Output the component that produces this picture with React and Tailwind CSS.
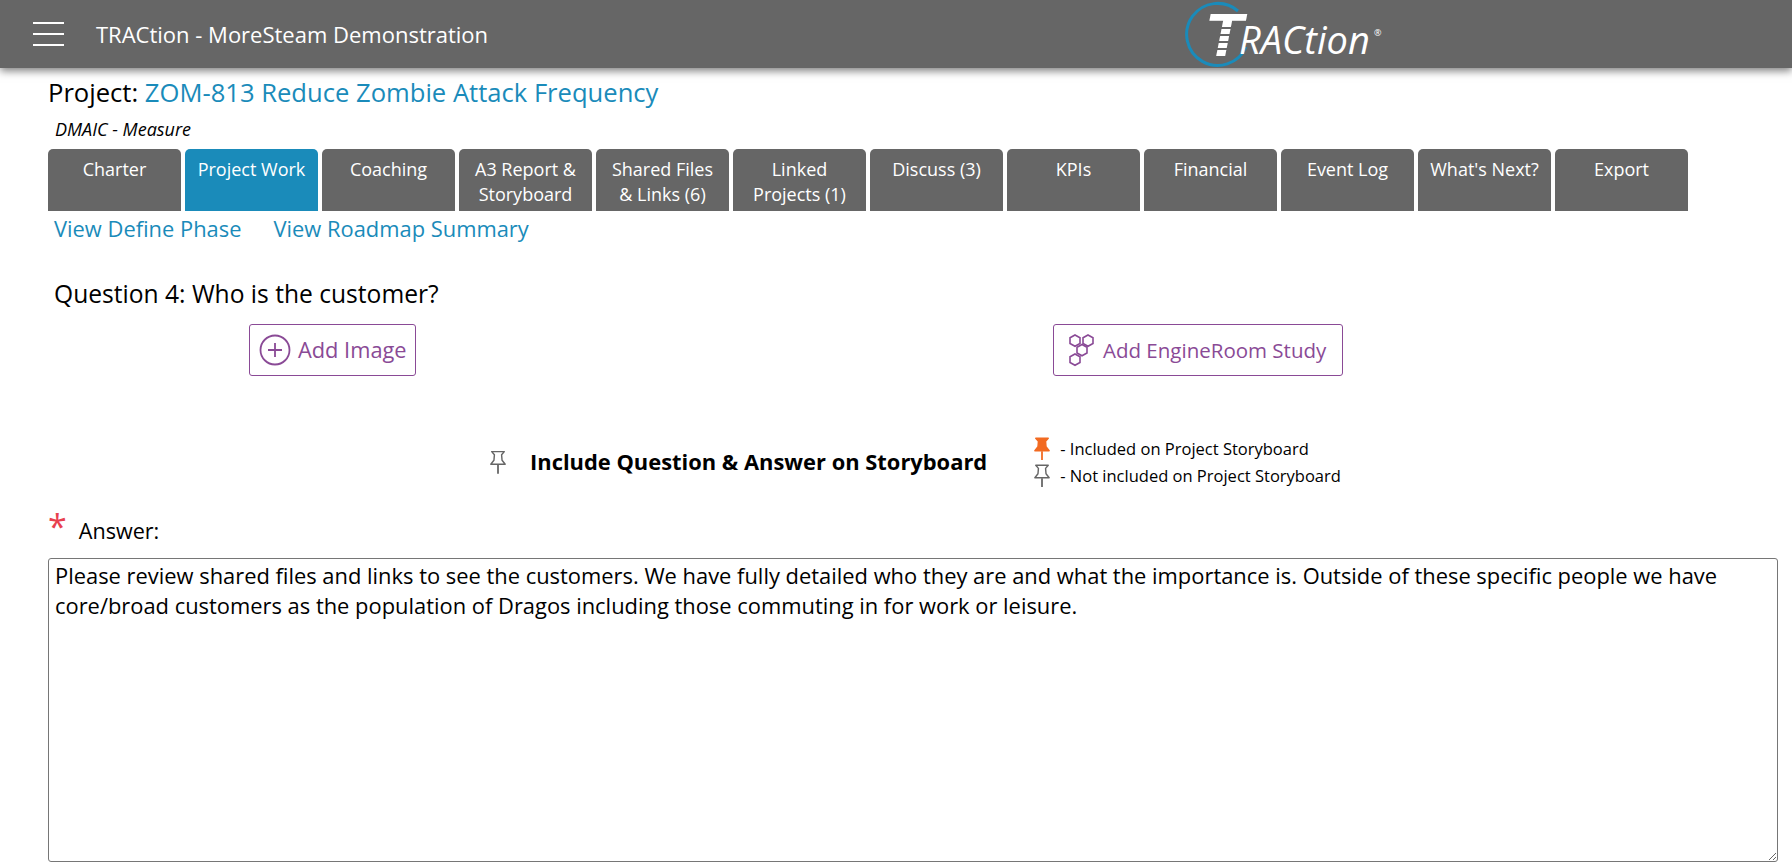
import { useState } from 'react';

const tabs = [
  { label: 'Charter' },
  { label: 'Project Work', active: true },
  { label: 'Coaching' },
  { label: 'A3 Report & Storyboard' },
  { label: 'Shared Files & Links (6)' },
  { label: 'Linked Projects (1)' },
  { label: 'Discuss (3)' },
  { label: 'KPIs' },
  { label: 'Financial' },
  { label: 'Event Log' },
  { label: "What's Next?" },
  { label: 'Export' },
];

const answer =
  'Please review shared files and links to see the customers. We have fully detailed who they are and what the importance is. Outside of these specific people we have core/broad customers as the population of Dragos including those commuting in for work or leisure.';

function Pin({ filled = false, className = '' }) {
  return (
    <svg viewBox="0 0 20 28" className={className}>
      <path
        d="M3 2.5 H17 L14 6 L14.5 12 L18 16.5 H2 L5.5 12 L6 6 Z"
        fill={filled ? '#f26a21' : 'none'}
        stroke={filled ? '#f26a21' : '#666'}
        strokeWidth="1.6"
        strokeLinejoin="round"
      />
      <path d="M10 17 V27" stroke={filled ? '#f26a21' : '#666'} strokeWidth="2" />
    </svg>
  );
}

function Logo() {
  return (
    <div className="relative h-[68px] w-[200px] shrink-0">
      <svg viewBox="0 0 200 68" className="absolute inset-0 h-full w-full">
        <path d="M58 11 A31 31 0 1 0 66 47" fill="none" stroke="#1a8bba" strokeWidth="3" />
        <text
          x="25"
          y="56"
          fontFamily="'Liberation Sans', sans-serif"
          fontSize="62"
          fontWeight="700"
          fontStyle="italic"
          fill="#fff"
        >
          T
        </text>
        <path d="M22 28 H56 M22 35 H56 M22 42 H56 M22 49 H56" stroke="#666" strokeWidth="2" />
      </svg>
      <span className="absolute left-[59px] top-[17px] font-['Open_Sans',sans-serif] text-[38px] leading-[44px] font-medium italic text-white">
        RACtion
      </span>
      <span className="absolute left-[194px] top-[28px] text-[9px] leading-none text-white">®</span>
    </div>
  );
}

export default function App() {
  const [text, setText] = useState(answer);

  return (
    <div className="min-h-screen overflow-hidden bg-white font-['Open_Sans',sans-serif] text-black">
      {/* barra superior */}
      <header className="flex h-[68px] items-center bg-[#666] shadow-[0_3px_8px_rgba(0,0,0,0.5)]">
        <div className="ml-[33px] flex w-[31px] flex-col gap-[9px]">
          <span className="h-[2px] bg-white" />
          <span className="h-[2px] bg-white" />
          <span className="h-[2px] bg-white" />
        </div>
        <span className="ml-[32px] w-[1084px] text-[22px] text-white">TRACtion - MoreSteam Demonstration</span>
        <Logo />
      </header>

      <main className="px-[48px]">
        <h1 className="mt-[9px] text-[25.6px] leading-[32px]">
          Project: <a className="text-[#1a8bba]">ZOM-813 Reduce Zombie Attack Frequency</a>
        </h1>
        <p className="mt-[8px] ml-[7px] text-[18px] leading-[24px] italic">DMAIC - Measure</p>

        {/* pestañas */}
        <nav className="mt-[8px] flex gap-[4px]">
          {tabs.map((tab) => (
            <div
              key={tab.label}
              className={`h-[62px] w-[133px] rounded-t-[5px] px-[8px] pt-[8px] text-center text-[18px] leading-[25px] text-white ${
                tab.active ? 'bg-[#1a8bba]' : 'bg-[#666]'
              }`}
            >
              {tab.label}
            </div>
          ))}
        </nav>

        <div className="mt-[2px] ml-[6px] flex gap-[32px] text-[21.9px] leading-[32px] text-[#1a8bba]">
          <a>View Define Phase</a>
          <a>View Roadmap Summary</a>
        </div>

        <h2 className="mt-[33px] ml-[6px] text-[24.6px] leading-[32px]">Question 4: Who is the customer?</h2>

        <div className="mt-[14px] ml-[201px] flex">
          <button className="flex h-[52px] w-[167px] items-center gap-[7px] rounded-[3px] border border-[#8a4a96] pl-[9px] text-[21.8px] text-[#8a4a96]">
            <svg viewBox="0 0 32 32" className="h-[32px] w-[32px]" fill="none" stroke="#8a4a96" strokeWidth="1.8">
              <circle cx="16" cy="16" r="14.5" />
              <path d="M16 9 V23 M9 16 H23" />
            </svg>
            Add Image
          </button>
          <button className="ml-[637px] flex h-[52px] w-[290px] items-center gap-[7px] rounded-[3px] border border-[#8a4a96] pl-[14px] text-[20.5px] whitespace-nowrap text-[#8a4a96]">
            <svg viewBox="0 0 28 34" className="h-[34px] w-[28px]" fill="none" stroke="#8a4a96" strokeWidth="1.6">
              <path d="M7 2 L12 4.8 V10.5 L7 13.3 L2 10.5 V4.8 Z" />
              <path d="M20 2 L25 4.8 V10.5 L20 13.3 L15 10.5 V4.8 Z" />
              <path d="M14 11.5 L19 14.3 V20 L14 22.8 L9 20 V14.3 Z" />
              <path d="M7 21 L12 23.8 V29.5 L7 32.3 L2 29.5 V23.8 Z" />
            </svg>
            Add EngineRoom Study
          </button>
        </div>

        {/* storyboard */}
        <div className="mt-[53px] ml-[441px] flex h-[66px] items-center">
          <Pin className="h-[26px] w-[18px]" />
          <span className="ml-[23px] text-[21.9px] font-bold">Include Question &amp; Answer on Storyboard</span>
          <div className="ml-[46px] flex flex-col gap-[2px] text-[16.5px] leading-[25px]">
            <div className="flex items-center gap-[9px]">
              <Pin filled className="h-[25px] w-[18px]" />- Included on Project Storyboard
            </div>
            <div className="flex items-center gap-[9px]">
              <Pin className="h-[25px] w-[18px]" />- Not included on Project Storyboard
            </div>
          </div>
        </div>

        <div className="mt-[5px] flex h-[36px] items-start">
          <span className="mt-[8px] text-[34px] leading-[36px] text-[#e8414f]">*</span>
          <label className="mt-[18px] ml-[12px] text-[21.6px] leading-[26px]">Answer:</label>
        </div>

        <textarea
          value={text}
          onChange={(e) => setText(e.target.value)}
          className="mt-[22px] block h-[304px] w-[1730px] rounded-[3px] border border-[#767676] px-[6px] py-[2px] text-[21.9px] leading-[30px] outline-none"
        />
      </main>
    </div>
  );
}
